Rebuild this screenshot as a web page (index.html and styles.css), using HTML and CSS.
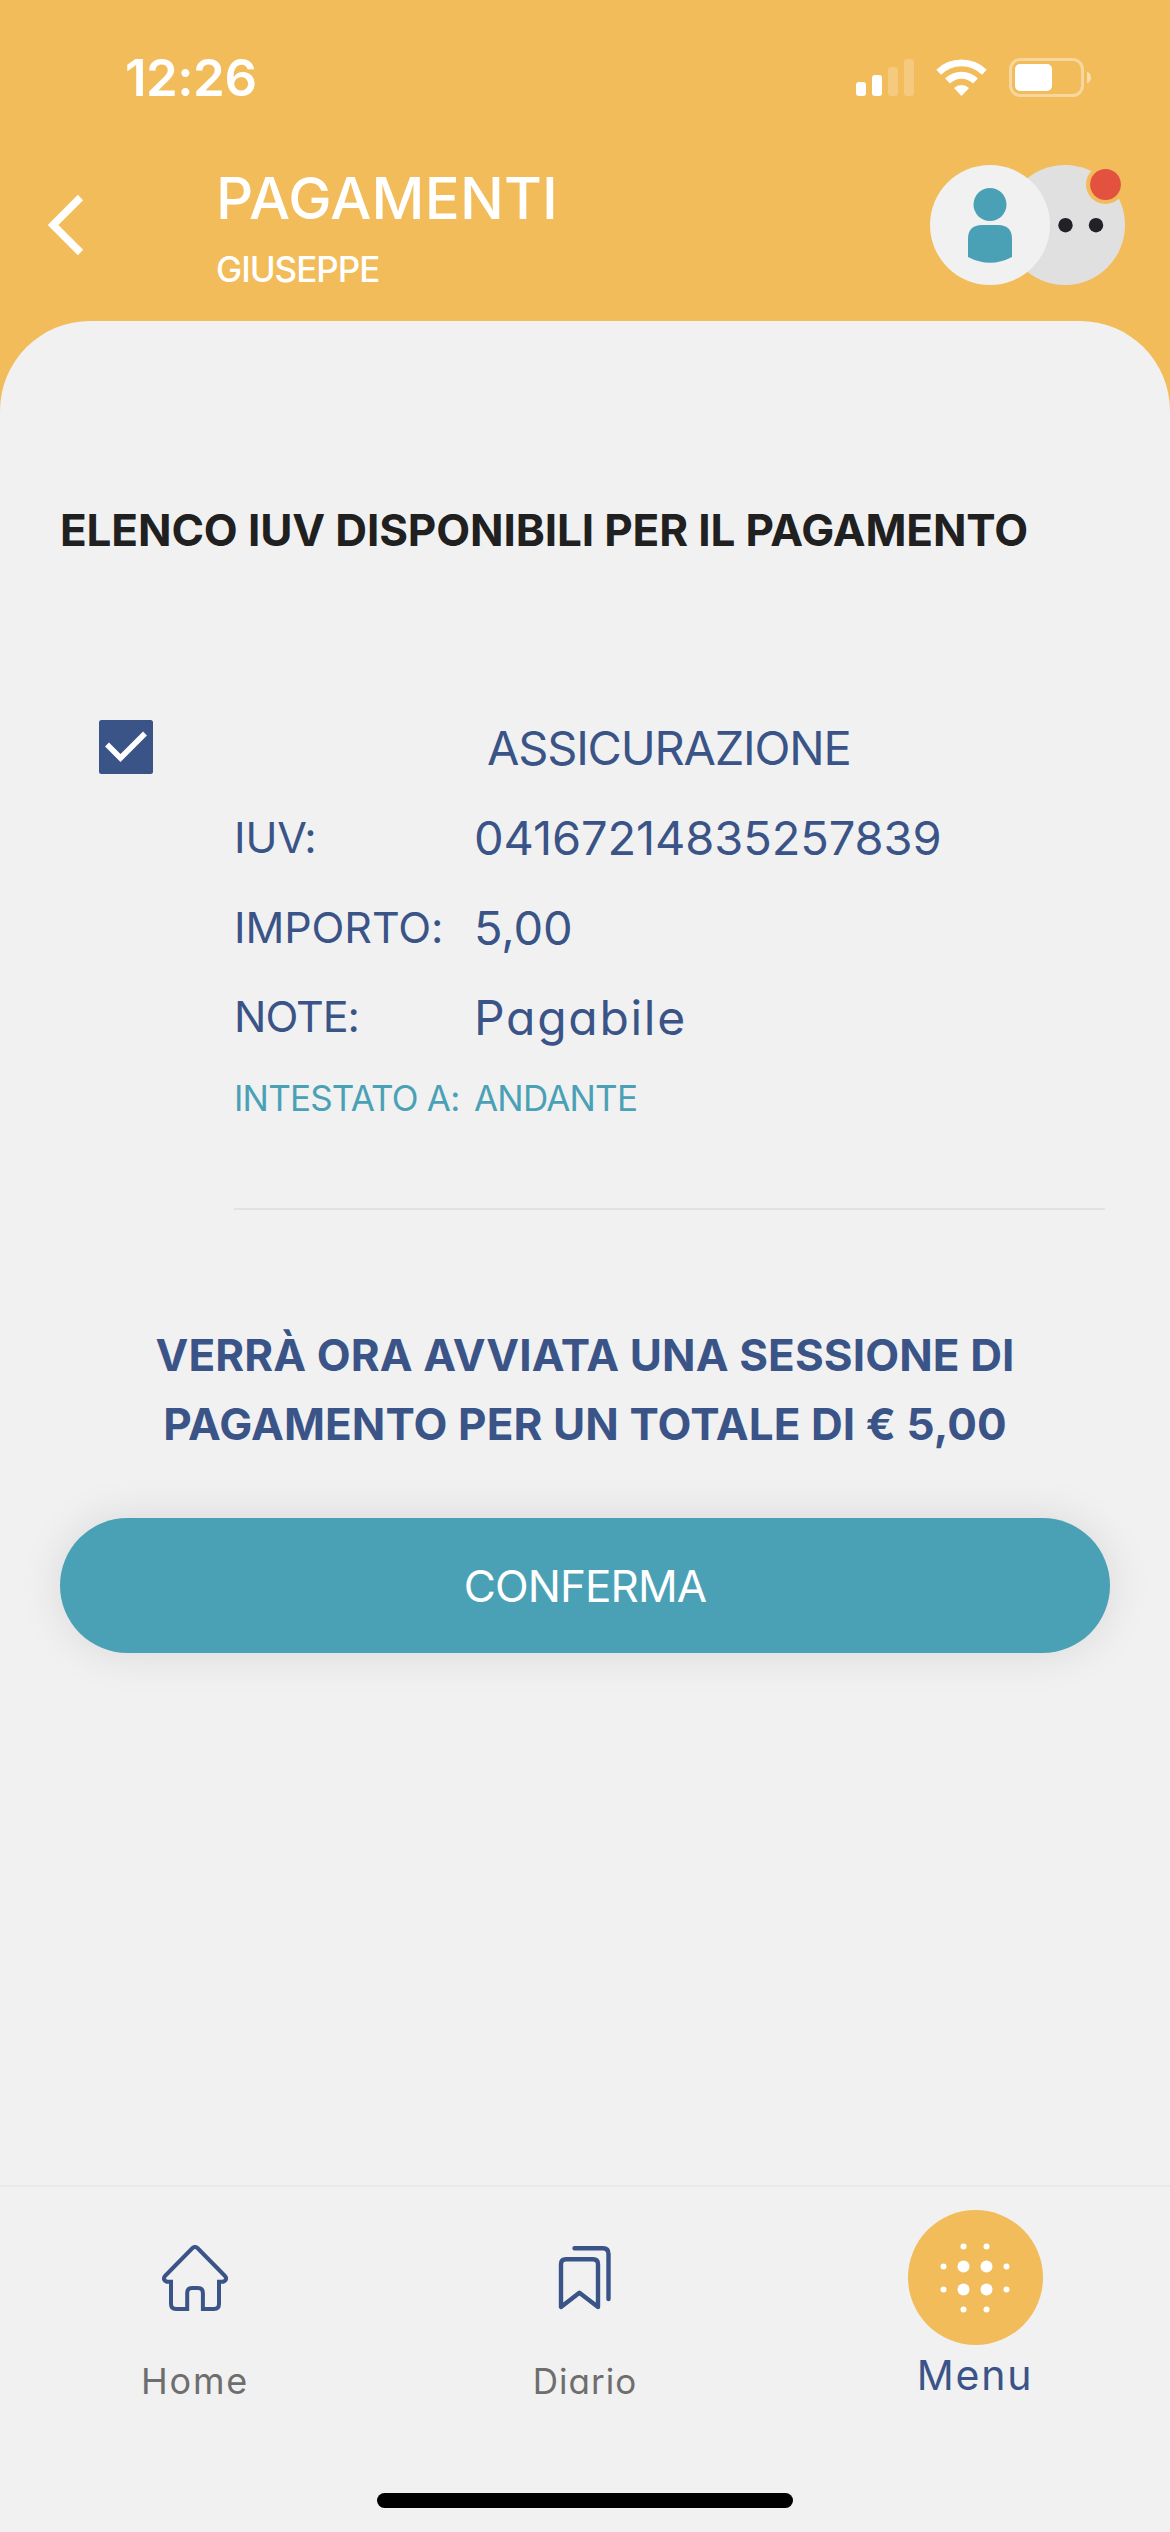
FILE: index.html
```
<!DOCTYPE html>
<html lang="it">
<head>
    <meta charset="UTF-8">
    <meta name="viewport" content="width=device-width, initial-scale=1.0">
    <title>Pagamenti</title>
    <link rel="stylesheet" href="styles.css">
</head>
<body>
    <div class="app">
        <div class="status-bar">
            <span class="time">12:26</span>
            <svg class="status-icons" width="236" height="40" viewBox="0 0 236 40" fill="#fff">
                <rect x="0" y="24" width="10" height="14" rx="3"/>
                <rect x="16" y="17" width="10" height="21" rx="3"/>
                <rect x="32" y="9" width="10" height="29" rx="3" opacity=".22"/>
                <rect x="48" y="1" width="10" height="37" rx="3" opacity=".22"/>
                <path d="M80.300 11.700A36 36 0 0 1 130.700 11.700L126 16.800A29 29 0 0 0 85 16.800Z"/>
                <path d="M89.200 20.500A23 23 0 0 1 121.800 20.500L117 25.500A16.500 16.500 0 0 0 94 25.500Z"/>
                <path d="M98 30A11 11 0 0 1 113 30L105.500 38Z"/>
                <rect x="154.500" y="1.500" width="72" height="36" rx="10" fill="none" stroke="#fff" stroke-width="3" opacity=".4"/>
                <rect x="159" y="6" width="37" height="27" rx="5"/>
                <path d="M231 13.500Q235 15.500 235 19.500T231 25.500Z" opacity=".5"/>
            </svg>
        </div>

        <header class="header">
            <svg class="back" width="36" height="62" viewBox="0 0 36 62">
                <path d="M32.500 3.500L5 31L32.500 58.500" fill="none" stroke="#fff" stroke-width="7.500"/>
            </svg>
            <div class="titles">
                <h1 class="title">PAGAMENTI</h1>
                <p class="subtitle">GIUSEPPE</p>
            </div>
            <svg class="avatars" width="196" height="120" viewBox="0 0 196 120">
                <circle cx="135" cy="60" r="60" fill="#e0e0e0"/>
                <circle cx="175.500" cy="19.500" r="19.500" fill="#f2bc5a"/>
                <circle cx="175.500" cy="19.500" r="15.400" fill="#e2523f"/>
                <circle cx="135.500" cy="60.200" r="7.200" fill="#232126"/>
                <circle cx="166" cy="60.200" r="7.200" fill="#232126"/>
                <circle cx="60" cy="60" r="60" fill="#f1f1f1"/>
                <circle cx="60" cy="39.500" r="16.500" fill="#4aa1b6"/>
                <path d="M38 92V74Q38 60 52 60H68Q82 60 82 74V92Q60 103.500 38 92Z" fill="#4aa1b6"/>
            </svg>
        </header>

        <main class="content">
            <h2 class="heading">ELENCO IUV DISPONIBILI PER IL PAGAMENTO</h2>

            <div class="payment">
                <svg class="checkbox" width="54" height="54" viewBox="0 0 54 54">
                    <rect width="54" height="54" rx="2.500" fill="#3b5488"/>
                    <path d="M8 24.500L21.500 38L46 13.500" fill="none" stroke="#fff" stroke-width="5.500"/>
                </svg>
                <div class="details">
                    <div class="row">
                        <span class="name">ASSICURAZIONE</span>
                    </div>
                    <div class="row">
                        <span class="label">IUV:</span>
                        <span class="value">04167214835257839</span>
                    </div>
                    <div class="row">
                        <span class="label">IMPORTO:</span>
                        <span class="value">5,00</span>
                    </div>
                    <div class="row note">
                        <span class="label">NOTE:</span>
                        <span class="value">Pagabile</span>
                    </div>
                    <div class="row owner">
                        <span class="label">INTESTATO A:</span>
                        <span class="value">ANDANTE</span>
                    </div>
                </div>
            </div>

            <p class="message">VERRÀ ORA AVVIATA UNA SESSIONE DI<br>PAGAMENTO PER UN TOTALE DI € 5,00</p>
            <button class="confirm">CONFERMA</button>
        </main>

        <nav class="nav">
            <a class="nav-item">
                <span class="nav-icon">
                    <svg width="66" height="66" viewBox="0 0 66 66" fill="none" stroke="#3b5488" stroke-width="4">
                        <path d="M30.500 3Q33 1 35.500 3L62.500 30.500Q65 33 63.500 35Q62.500 36.800 60 36.800H57V59Q57 64 52 64H40.900V48Q40.900 43 36 43H30Q25.200 43 25.200 48V64H14Q9 64 9 59V36.800H6Q3.500 36.800 2.500 35Q1 33 3.500 30.500Z"/>
                    </svg>
                </span>
                <span class="nav-label home">Home</span>
            </a>
            <a class="nav-item">
                <span class="nav-icon">
                    <svg width="54" height="66" viewBox="0 0 54 66" fill="none" stroke="#3b5488" stroke-width="4.400" stroke-linecap="round" stroke-linejoin="round">
                        <path d="M3 62V19.300Q3 14.300 8 14.300H35Q40 14.300 40 19.300V62L21.400 47.700Z"/>
                        <path d="M16.500 3.300H45Q50.500 3.300 50.500 9V54"/>
                    </svg>
                </span>
                <span class="nav-label">Diario</span>
            </a>
            <a class="nav-item">
                <span class="nav-icon round">
                    <svg width="72" height="72" viewBox="-36 -36 72 72" fill="#fff">
                        <circle cx="-11.500" cy="-11.500" r="6"/>
                        <circle cx="11.500" cy="-11.500" r="6"/>
                        <circle cx="-11.500" cy="11.500" r="6"/>
                        <circle cx="11.500" cy="11.500" r="6"/>
                        <circle cx="-11.500" cy="-31.500" r="3"/>
                        <circle cx="11.500" cy="-31.500" r="3"/>
                        <circle cx="-11.500" cy="31.500" r="3"/>
                        <circle cx="11.500" cy="31.500" r="3"/>
                        <circle cx="-31.500" cy="-11.500" r="3"/>
                        <circle cx="31.500" cy="-11.500" r="3"/>
                        <circle cx="-31.500" cy="11.500" r="3"/>
                        <circle cx="31.500" cy="11.500" r="3"/>
                    </svg>
                </span>
                <span class="nav-label active">Menu</span>
            </a>
        </nav>
        <div class="home-indicator"></div>
    </div>
</body>
</html>
```

FILE: styles.css
```
* {
    box-sizing: border-box;
    margin: 0;
    padding: 0;
}
body {
    background: #f1f1f1;
    font-family: Inter, "Open Sans", sans-serif;
    font-feature-settings: "cv11";
    color: #3b5488;
}
svg {
    display: block;
    flex: none;
}
.app {
    width: 1170px;
    height: 2532px;
    display: flex;
    flex-direction: column;
    background: linear-gradient(#f2bc5a 500px, #f1f1f1 500px);
    overflow: hidden;
    white-space: nowrap;
}
.status-bar {
    height: 155px;
    padding: 0 78px 0 125px;
    display: flex;
    align-items: center;
    justify-content: space-between;
    color: white;
}
.time {
    font-size: 51px;
    font-weight: 600;
    letter-spacing: -0.5px;
}
.header {
    height: 166px;
    padding: 0 44px 26px 48px;
    display: flex;
    align-items: center;
    color: white;
}
.titles {
    flex: 1;
    padding-left: 132px;
    padding-top: 3px;
}
.title {
    font-size: 58px;
    line-height: 86px;
    font-weight: 500;
    letter-spacing: 0.2px;
}
.subtitle {
    font-size: 35px;
    line-height: 57px;
    font-weight: 500;
    letter-spacing: -1px;
}
.content {
    flex: 1;
    background: #f1f1f1;
    border-radius: 90px 90px 0 0;
    padding: 179px 60px 0;
}
.heading {
    font-size: 44px;
    line-height: 60px;
    font-weight: 700;
    letter-spacing: -0.12px;
    color: #202020;
}
.payment {
    display: flex;
    align-items: flex-start;
    margin-top: 142px;
    padding-left: 39px;
}
.checkbox {
    margin-top: 18px;
}
.details {
    width: 871px;
    margin-left: 81px;
    padding-bottom: 75px;
    border-bottom: 2px solid #e2e2e2;
}
.row {
    height: 90px;
    display: flex;
    align-items: center;
    font-size: 47px;
    letter-spacing: -0.1px;
}
.name {
    padding-left: 253px;
    letter-spacing: -1.2px;
}
.label {
    width: 240px;
    font-size: 43px;
}
.note .label {
    padding-bottom: 3px;
    letter-spacing: -1px;
}
.note .value {
    font-size: 48px;
    letter-spacing: 1.7px;
}
.owner {
    height: 71px;
    color: #4aa1b6;
    letter-spacing: -0.8px;
}
.owner span {
    font-size: 35px;
}
.message {
    margin-top: 111px;
    text-align: center;
    font-size: 44px;
    line-height: 69px;
    font-weight: 700;
    letter-spacing: 0.1px;
}
.confirm {
    display: block;
    width: 1050px;
    height: 135px;
    margin-top: 59px;
    border: none;
    border-radius: 68px;
    background: #4aa1b6;
    box-shadow: 0 0 45px rgba(0, 0, 0, 0.1);
    color: white;
    font-family: inherit;
    font-size: 44px;
    letter-spacing: -0.9px;
}
.nav {
    height: 254px;
    padding-top: 23px;
    display: flex;
    background: #f1f1f1;
    border-top: 2px solid #eaeaea;
}
.nav-item {
    flex: 1;
    display: flex;
    flex-direction: column;
    align-items: center;
}
.nav-icon {
    width: 135px;
    height: 135px;
    display: flex;
    align-items: center;
    justify-content: center;
}
.round {
    border-radius: 50%;
    background: #f2bc5a;
}
.nav-label {
    font-size: 35px;
    line-height: 72px;
    letter-spacing: 1px;
    color: #6e6e6e;
}
.home {
    font-size: 36px;
    letter-spacing: 1.8px;
}
.active {
    font-size: 41px;
    line-height: 61px;
    letter-spacing: 1.8px;
    color: #3b5488;
}
.home-indicator {
    width: 416px;
    height: 15px;
    margin: 54px auto 24px;
    border-radius: 8px;
    background: black;
}
```
